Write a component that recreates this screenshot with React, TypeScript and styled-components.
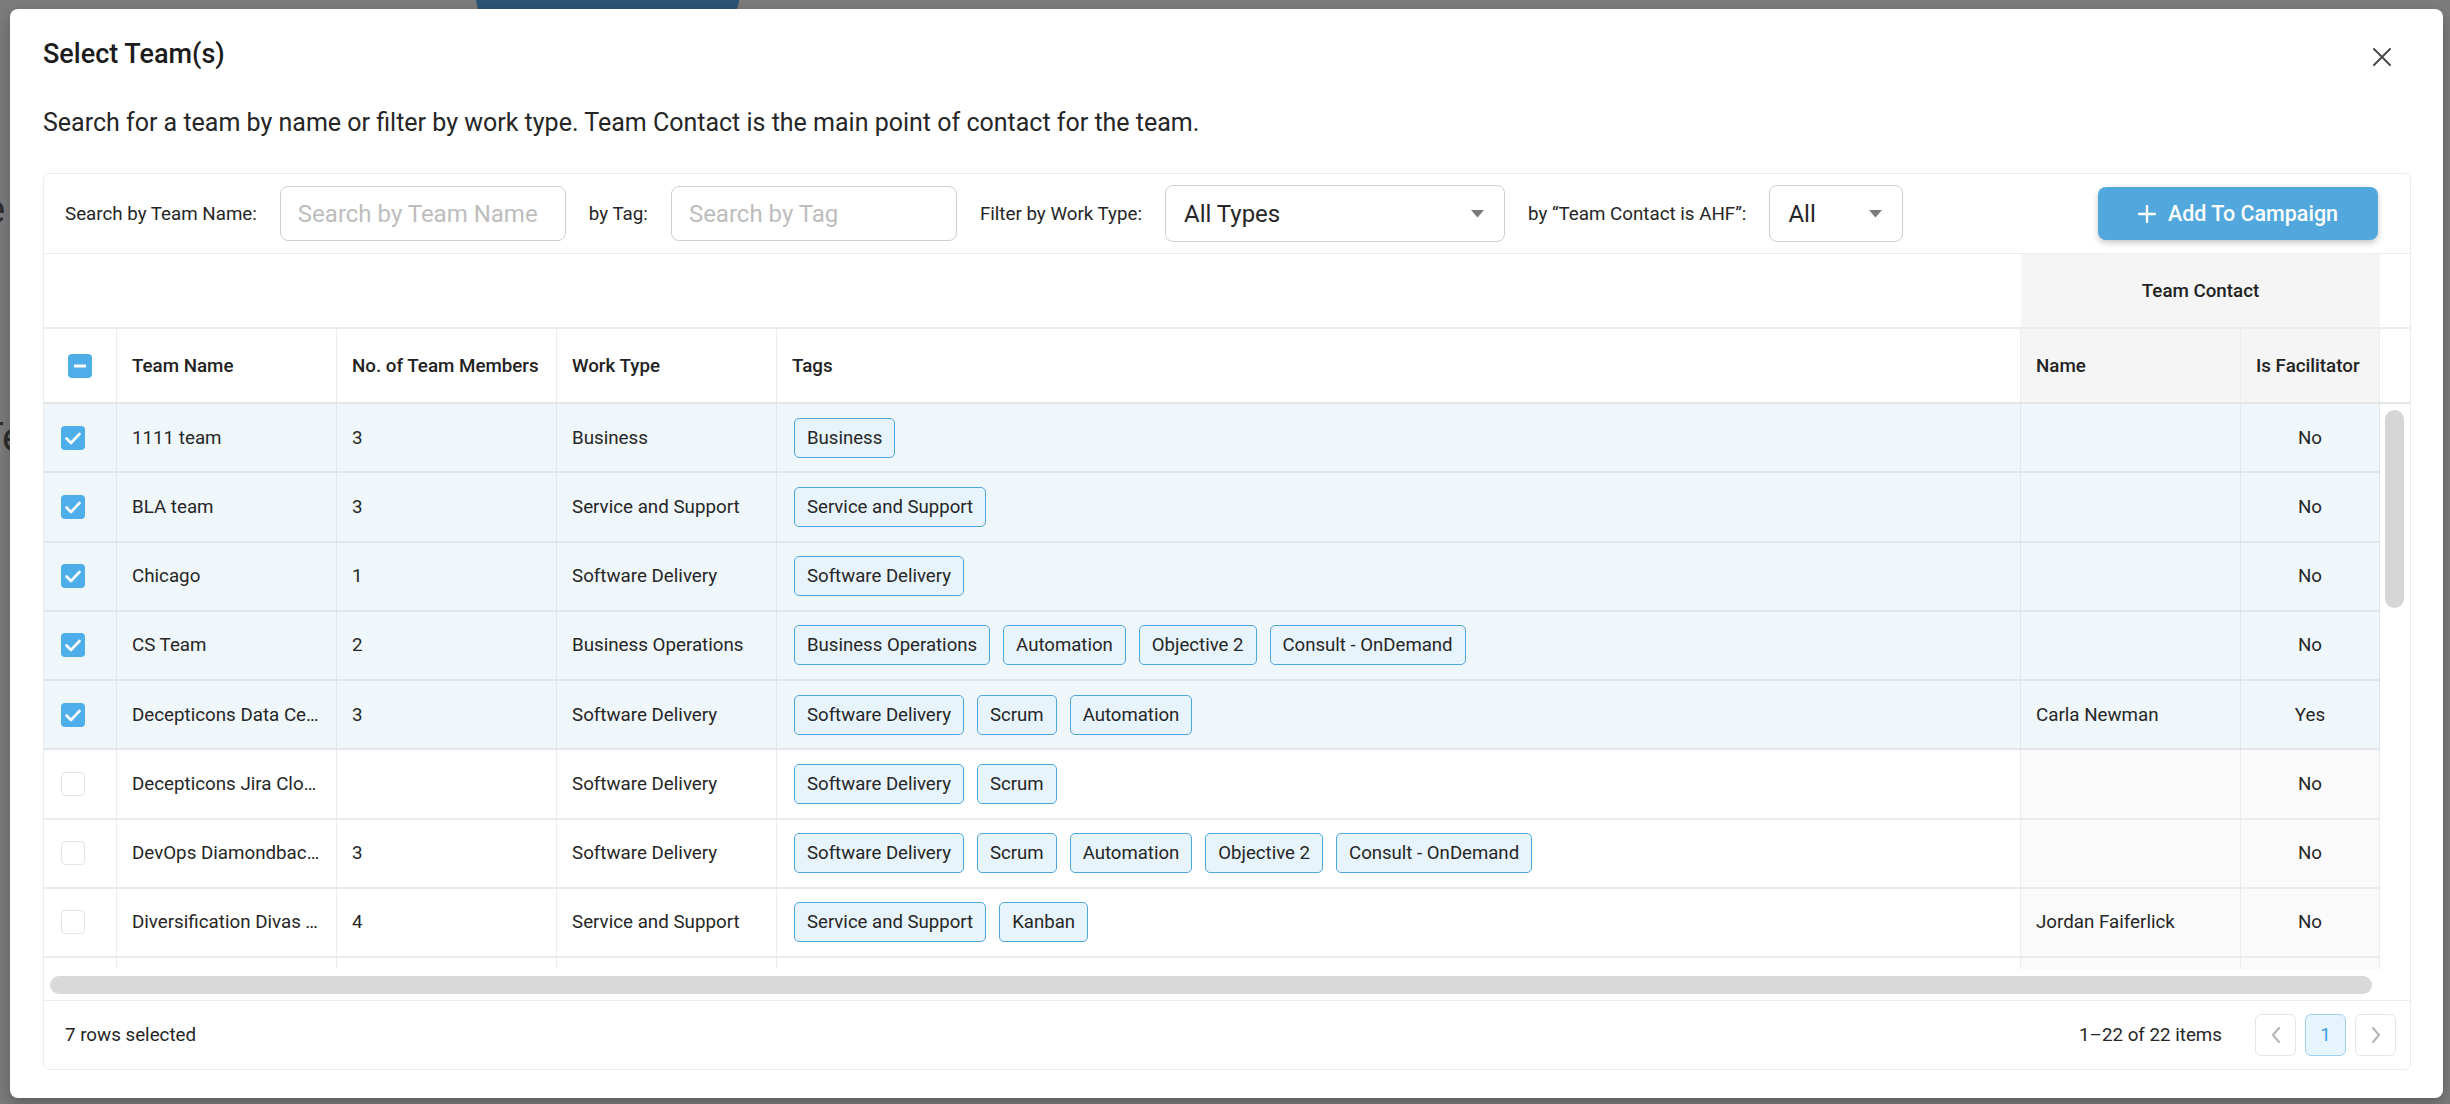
import React from 'react';
import styled, { createGlobalStyle } from 'styled-components';

const GlobalStyle = createGlobalStyle`
  html, body { margin: 0; padding: 0; }
  body {
    background: #7c7c7c;
    font-family: Roboto, "Liberation Sans", Arial, sans-serif;
    color: #262626;
  }
  * { box-sizing: border-box; }
`;

const Backdrop = styled.div`
  position: relative;
  width: 2450px;
  height: 1104px;
  padding: 9px 7px 6px 10px;
  overflow: hidden;
`;

const BehindBlob = styled.div`
  position: absolute;
  left: 475px;
  top: -70px;
  width: 265px;
  height: 120px;
  border-radius: 60px;
  background: #2c5473;
`;

const BehindGlyph = styled.span<{ $x: number; $y: number }>`
  position: absolute;
  left: ${(p) => p.$x}px;
  top: ${(p) => p.$y}px;
  font-size: 40px;
  line-height: 40px;
  color: #2e2e2e;
`;

const Modal = styled.div`
  position: relative;
  z-index: 1;
  height: 100%;
  background: #fff;
  border-radius: 8px;
  box-shadow: 0 6px 16px rgba(0, 0, 0, 0.25);
  display: flex;
  flex-direction: column;
  padding: 28px 32px 28px 33px;
`;

const Header = styled.div`
  display: flex;
  justify-content: space-between;
  align-items: flex-start;
`;

const Title = styled.h2`
  margin: 0;
  font-size: 27px;
  line-height: 34px;
  font-weight: 500;
  color: #1c1c1c;
`;

const CloseButton = styled.button`
  margin: 8px 17px 0 0;
  width: 24px;
  height: 24px;
  padding: 0;
  border: 0;
  background: none;
  display: flex;
  align-items: center;
  justify-content: center;
  color: #4a4a4a;
  cursor: pointer;
`;

const Description = styled.p`
  margin: 36px 0 0;
  font-size: 25px;
  line-height: 32px;
  color: #262626;
`;

const Card = styled.div`
  margin-top: 34px;
  flex: 1;
  border: 1px solid #ececec;
  border-radius: 6px;
  display: flex;
  flex-direction: column;
  overflow: hidden;
`;

const FilterBar = styled.div`
  height: 80px;
  flex: none;
  display: flex;
  align-items: center;
  gap: 23px;
  padding: 0 32px 0 21px;
  border-bottom: 1px solid #ececec;
`;

const FilterLabel = styled.span`
  font-size: 18.75px;
  color: #262626;
  white-space: nowrap;
`;

const TextInput = styled.input`
  width: 286px;
  height: 55px;
  border: 1px solid #cfcfcf;
  border-radius: 8px;
  padding: 0 17px;
  font-family: inherit;
  font-size: 24px;
  color: #262626;
  outline: none;
  &::placeholder { color: #bdbdbd; }
`;

const SelectBox = styled.div<{ $w: number }>`
  width: ${(p) => p.$w}px;
  height: 57px;
  border: 1px solid #cfcfcf;
  border-radius: 8px;
  padding: 0 20px 0 18px;
  display: flex;
  align-items: center;
  justify-content: space-between;
  font-size: 24px;
  color: #262626;
`;

const PrimaryButton = styled.button`
  margin-left: auto;
  width: 280px;
  height: 53px;
  border: 0;
  border-radius: 8px;
  background: #52a8dc;
  color: #fff;
  font-family: inherit;
  font-size: 21.5px;
  font-weight: 500;
  display: flex;
  align-items: center;
  justify-content: center;
  gap: 12px;
  box-shadow: 0 3px 6px rgba(0, 0, 0, 0.22);
  cursor: pointer;
`;

const HEAD_COLS = '73px 220px 220px 220px 1fr 220px 139px 30px';
const BODY_COLS = '73px 220px 220px 220px 1fr 220px 139px';

const GroupRow = styled.div`
  display: grid;
  grid-template-columns: ${HEAD_COLS};
  height: 75px;
  flex: none;
  border-bottom: 2px solid #ececec;
`;

const GroupSpacer = styled.div`
  grid-column: 1 / 6;
`;

const GroupCell = styled.div`
  grid-column: 6 / 8;
  background: #f5f5f5;
  display: flex;
  align-items: center;
  justify-content: center;
  font-size: 18.75px;
  font-weight: 500;
  color: #222;
`;

const HeaderRow = styled.div`
  display: grid;
  grid-template-columns: ${HEAD_COLS};
  height: 75px;
  flex: none;
  border-bottom: 2px solid #e6e6e6;
`;

const HeadCell = styled.div<{ $fixed?: boolean; $center?: boolean }>`
  display: flex;
  align-items: center;
  justify-content: ${(p) => (p.$center ? 'center' : 'flex-start')};
  padding: ${(p) => (p.$center ? '0' : '0 15px')};
  border-right: 1px solid #ececec;
  background: ${(p) => (p.$fixed ? '#f5f5f5' : '#fff')};
  font-size: 18.75px;
  font-weight: 500;
  color: #222;
  white-space: nowrap;
`;

const BodyArea = styled.div`
  display: flex;
  height: 565px;
  flex: none;
  overflow: hidden;
`;

const Rows = styled.div`
  flex: 1;
  min-width: 0;
  overflow: hidden;
`;

const Row = styled.div<{ $selected: boolean }>`
  display: grid;
  grid-template-columns: ${BODY_COLS};
  height: 69.25px;
  border-bottom: 2px solid ${(p) => (p.$selected ? '#e0e6ea' : '#ebebeb')};
  background: ${(p) => (p.$selected ? '#f0f7fb' : '#fff')};
`;

const Cell = styled.div<{ $fixed?: boolean; $selected?: boolean; $center?: boolean }>`
  display: flex;
  align-items: center;
  justify-content: ${(p) => (p.$center ? 'center' : 'flex-start')};
  min-width: 0;
  padding: 0 15px;
  border-right: 1px solid ${(p) => (p.$selected ? '#e0e6ea' : '#ececec')};
  background: ${(p) => (p.$fixed && !p.$selected ? '#fafafa' : 'transparent')};
  font-size: 18.75px;
  color: #262626;
`;

const CheckCell = styled(Cell)`
  padding: 0 0 0 17px;
`;

const TagsCell = styled(Cell)`
  padding: 0 17px;
  gap: 13px;
`;

const Ellipsis = styled.span`
  white-space: nowrap;
  overflow: hidden;
  text-overflow: ellipsis;
`;

const Tag = styled.span`
  height: 40px;
  padding: 0 12px;
  display: inline-flex;
  align-items: center;
  border: 1px solid #4ea6e0;
  border-radius: 5px;
  background: #e8f4fc;
  font-size: 18.6px;
  color: #262626;
  white-space: nowrap;
`;

const VScrollGutter = styled.div`
  width: 30px;
  flex: none;
  padding: 6px 0 0 5px;
  background: #fff;
`;

const VThumb = styled.div`
  width: 19px;
  height: 198px;
  border-radius: 10px;
  background: #d6d6d6;
`;

const HScrollArea = styled.div`
  height: 31px;
  flex: none;
  padding: 7px 38px 0 6px;
`;

const HThumb = styled.div`
  height: 18px;
  border-radius: 9px;
  background: #d9d9d9;
`;

const Footer = styled.div`
  flex: 1;
  border-top: 1px solid #ececec;
  display: flex;
  align-items: center;
  justify-content: space-between;
  padding: 0 14px 0 21px;
  font-size: 18.75px;
  color: #262626;
`;

const Pager = styled.div`
  display: flex;
  align-items: center;
`;

const PagerText = styled.span`
  margin-right: 24px;
`;

const PageButton = styled.button<{ $active?: boolean }>`
  width: 41px;
  height: 42px;
  margin-left: 9px;
  border-radius: 6px;
  border: 1px solid ${(p) => (p.$active ? '#9fd0f2' : '#e6e6e6')};
  background: ${(p) => (p.$active ? '#e6f4fd' : '#fff')};
  color: ${(p) => (p.$active ? '#3d9de0' : '#b5b5b5')};
  font-family: inherit;
  font-size: 18.75px;
  display: flex;
  align-items: center;
  justify-content: center;
  padding: 0;
`;

const Box = styled.span<{ $on: boolean }>`
  width: 24px;
  height: 24px;
  border-radius: 4px;
  display: inline-flex;
  align-items: center;
  justify-content: center;
  background: ${(p) => (p.$on ? '#4eaeea' : '#fff')};
  border: ${(p) => (p.$on ? 'none' : '1.5px solid #e4e4e4')};
  flex: none;
`;

const Checkbox: React.FC<{ checked?: boolean; indeterminate?: boolean }> = ({ checked, indeterminate }) => (
  <Box $on={!!checked || !!indeterminate}>
    {indeterminate ? (
      <svg width="24" height="24" viewBox="0 0 24 24">
        <rect x="6" y="10.5" width="12" height="3" rx="0.5" fill="#fff" />
      </svg>
    ) : checked ? (
      <svg width="24" height="24" viewBox="0 0 24 24">
        <polyline points="5.5,12.5 10,17 18.5,8" fill="none" stroke="#fff" strokeWidth="2.6" strokeLinecap="round" strokeLinejoin="round" />
      </svg>
    ) : null}
  </Box>
);

const Caret = () => (
  <svg width="13" height="8" viewBox="0 0 13 8">
    <path d="M0 0 L13 0 L6.5 7.5 Z" fill="#7a7a7a" />
  </svg>
);

type Team = {
  name: string;
  members: string;
  workType: string;
  tags: string[];
  contact: string;
  facilitator: string;
  selected: boolean;
};

const teams: Team[] = [
  { name: '1111 team', members: '3', workType: 'Business', tags: ['Business'], contact: '', facilitator: 'No', selected: true },
  { name: 'BLA team', members: '3', workType: 'Service and Support', tags: ['Service and Support'], contact: '', facilitator: 'No', selected: true },
  { name: 'Chicago', members: '1', workType: 'Software Delivery', tags: ['Software Delivery'], contact: '', facilitator: 'No', selected: true },
  { name: 'CS Team', members: '2', workType: 'Business Operations', tags: ['Business Operations', 'Automation', 'Objective 2', 'Consult - OnDemand'], contact: '', facilitator: 'No', selected: true },
  { name: 'Decepticons Data Center', members: '3', workType: 'Software Delivery', tags: ['Software Delivery', 'Scrum', 'Automation'], contact: 'Carla Newman', facilitator: 'Yes', selected: true },
  { name: 'Decepticons Jira Cloud', members: '', workType: 'Software Delivery', tags: ['Software Delivery', 'Scrum'], contact: '', facilitator: 'No', selected: false },
  { name: 'DevOps Diamondbacks', members: '3', workType: 'Software Delivery', tags: ['Software Delivery', 'Scrum', 'Automation', 'Objective 2', 'Consult - OnDemand'], contact: '', facilitator: 'No', selected: false },
  { name: 'Diversification Divas Team', members: '4', workType: 'Service and Support', tags: ['Service and Support', 'Kanban'], contact: 'Jordan Faiferlick', facilitator: 'No', selected: false },
  { name: 'Dream Team', members: '5', workType: 'Software Delivery', tags: ['Software Delivery'], contact: '', facilitator: 'No', selected: false },
];

export default function App() {
  return (
    <>
      <GlobalStyle />
      <Backdrop>
        <BehindBlob />
        <BehindGlyph $x={-16} $y={190}>e</BehindGlyph>
        <BehindGlyph $x={-20} $y={418}>Te</BehindGlyph>
        <Modal>
          <Header>
            <Title>Select Team(s)</Title>
            <CloseButton aria-label="Close">
              <svg width="18" height="18" viewBox="0 0 18 18">
                <path d="M1 1 L17 17 M17 1 L1 17" stroke="currentColor" strokeWidth="2" strokeLinecap="round" />
              </svg>
            </CloseButton>
          </Header>
          <Description>
            Search for a team by name or filter by work type. Team Contact is the main point of contact for the team.
          </Description>
          <Card>
            <FilterBar>
              <FilterLabel>Search by Team Name:</FilterLabel>
              <TextInput placeholder="Search by Team Name" />
              <FilterLabel>by Tag:</FilterLabel>
              <TextInput placeholder="Search by Tag" />
              <FilterLabel>Filter by Work Type:</FilterLabel>
              <SelectBox $w={340}>
                <span>All Types</span>
                <Caret />
              </SelectBox>
              <FilterLabel>by “Team Contact is AHF”:</FilterLabel>
              <SelectBox $w={134}>
                <span>All</span>
                <Caret />
              </SelectBox>
              <PrimaryButton>
                <svg width="18" height="18" viewBox="0 0 18 18">
                  <path d="M9 1 V17 M1 9 H17" stroke="#fff" strokeWidth="2.4" strokeLinecap="round" />
                </svg>
                Add To Campaign
              </PrimaryButton>
            </FilterBar>

            <GroupRow>
              <GroupSpacer />
              <GroupCell>Team Contact</GroupCell>
            </GroupRow>
            <HeaderRow>
              <HeadCell $center>
                <Checkbox indeterminate />
              </HeadCell>
              <HeadCell>Team Name</HeadCell>
              <HeadCell>No. of Team Members</HeadCell>
              <HeadCell>Work Type</HeadCell>
              <HeadCell>Tags</HeadCell>
              <HeadCell $fixed>Name</HeadCell>
              <HeadCell $fixed>Is Facilitator</HeadCell>
              <div />
            </HeaderRow>

            <BodyArea>
              <Rows>
                {teams.map((t) => (
                  <Row key={t.name} $selected={t.selected}>
                    <CheckCell $selected={t.selected}>
                      <Checkbox checked={t.selected} />
                    </CheckCell>
                    <Cell $selected={t.selected}>
                      <Ellipsis>{t.name}</Ellipsis>
                    </Cell>
                    <Cell $selected={t.selected}>{t.members}</Cell>
                    <Cell $selected={t.selected}>
                      <Ellipsis>{t.workType}</Ellipsis>
                    </Cell>
                    <TagsCell $selected={t.selected}>
                      {t.tags.map((tag) => (
                        <Tag key={tag}>{tag}</Tag>
                      ))}
                    </TagsCell>
                    <Cell $fixed $selected={t.selected}>
                      <Ellipsis>{t.contact}</Ellipsis>
                    </Cell>
                    <Cell $fixed $selected={t.selected} $center>
                      {t.facilitator}
                    </Cell>
                  </Row>
                ))}
              </Rows>
              <VScrollGutter>
                <VThumb />
              </VScrollGutter>
            </BodyArea>
            <HScrollArea>
              <HThumb />
            </HScrollArea>

            <Footer>
              <span>7 rows selected</span>
              <Pager>
                <PagerText>1–22 of 22 items</PagerText>
                <PageButton aria-label="Previous page">
                  <svg width="10" height="16" viewBox="0 0 10 16">
                    <path d="M8 1 L2 8 L8 15" fill="none" stroke="currentColor" strokeWidth="2" strokeLinecap="round" strokeLinejoin="round" />
                  </svg>
                </PageButton>
                <PageButton $active>1</PageButton>
                <PageButton aria-label="Next page">
                  <svg width="10" height="16" viewBox="0 0 10 16">
                    <path d="M2 1 L8 8 L2 15" fill="none" stroke="currentColor" strokeWidth="2" strokeLinecap="round" strokeLinejoin="round" />
                  </svg>
                </PageButton>
              </Pager>
            </Footer>
          </Card>
        </Modal>
      </Backdrop>
    </>
  );
}
